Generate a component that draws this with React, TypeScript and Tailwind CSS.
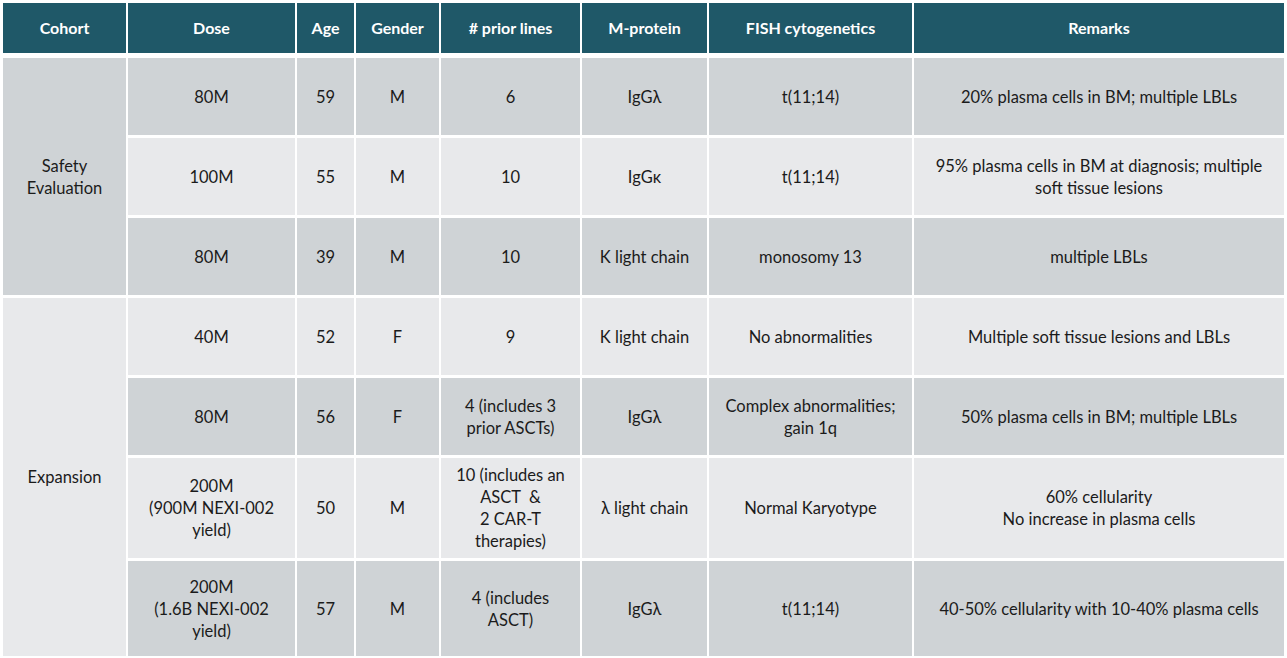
import React from "react";

const DARK = "bg-[#cfd3d6]";
const LIGHT = "bg-[#e8e9eb]";

type Row = {
  dose: React.ReactNode;
  age: string;
  gender: string;
  prior: React.ReactNode;
  mp: string;
  fish: React.ReactNode;
  remarks: React.ReactNode;
};

const rows: Row[] = [
  { dose: "80M", age: "59", gender: "M", prior: "6", mp: "IgGλ", fish: "t(11;14)", remarks: "20% plasma cells in BM; multiple LBLs" },
  { dose: "100M", age: "55", gender: "M", prior: "10", mp: "IgGκ", fish: "t(11;14)", remarks: <>95% plasma cells in BM at diagnosis; multiple<br />soft tissue lesions</> },
  { dose: "80M", age: "39", gender: "M", prior: "10", mp: "K light chain", fish: "monosomy 13", remarks: "multiple LBLs" },
  { dose: "40M", age: "52", gender: "F", prior: "9", mp: "K light chain", fish: "No abnormalities", remarks: "Multiple soft tissue lesions and LBLs" },
  { dose: "80M", age: "56", gender: "F", prior: <>4 (includes 3<br />prior ASCTs)</>, mp: "IgGλ", fish: <>Complex abnormalities;<br />gain 1q</>, remarks: "50% plasma cells in BM; multiple LBLs" },
  { dose: <>200M<br />(900M NEXI-002<br />yield)</>, age: "50", gender: "M", prior: <>10 (includes an<br />ASCT &nbsp;&amp;<br />2 CAR-T<br />therapies)</>, mp: "λ light chain", fish: "Normal Karyotype", remarks: <>60% cellularity<br />No increase in plasma cells</> },
  { dose: <>200M<br />(1.6B NEXI-002<br />yield)</>, age: "57", gender: "M", prior: <>4 (includes<br />ASCT)</>, mp: "IgGλ", fish: "t(11;14)", remarks: "40-50% cellularity with 10-40% plasma cells" },
];

const headers = ["Cohort", "Dose", "Age", "Gender", "# prior lines", "M-protein", "FISH cytogenetics", "Remarks"];

function Cell({ bg, children, className = "" }: { bg: string; children?: React.ReactNode; className?: string }) {
  return (
    <div className={`${bg} flex items-center justify-center text-center leading-[22px] ${className}`}>
      <div>{children}</div>
    </div>
  );
}

export default function App() {
  return (
    <div
      className="w-[1287px] h-[658px] bg-white p-[3px] text-[16.5px] text-[#1b1b1b]"
      style={{ fontFamily: "Lato, 'Open Sans', sans-serif" }}
    >
      <div className="grid grid-cols-[123px_167px_57px_83px_139px_125px_203px_370px] grid-rows-[52px_77px_77px_77px_77px_77px_100px_95px] gap-x-[2px] gap-y-[3px]">
        {headers.map((h) => (
          <div key={h} className="h-[50px] bg-[#1f5868] text-white text-[16px] font-bold flex items-center justify-center">
            {h}
          </div>
        ))}
        <Cell bg={DARK} className="row-span-3">
          Safety
          <br />
          Evaluation
        </Cell>
        {rows.slice(0, 3).map((r, i) => (
          <RowCells key={i} r={r} bg={i % 2 === 0 ? DARK : LIGHT} />
        ))}
        <Cell bg={LIGHT} className="row-span-4">
          Expansion
        </Cell>
        {rows.slice(3).map((r, i) => (
          <RowCells key={i + 3} r={r} bg={i % 2 === 0 ? LIGHT : DARK} />
        ))}
      </div>
    </div>
  );
}

function RowCells({ r, bg }: { r: Row; bg: string }) {
  return (
    <>
      <Cell bg={bg}>{r.dose}</Cell>
      <Cell bg={bg}>{r.age}</Cell>
      <Cell bg={bg}>{r.gender}</Cell>
      <Cell bg={bg}>{r.prior}</Cell>
      <Cell bg={bg}>{r.mp}</Cell>
      <Cell bg={bg}>{r.fish}</Cell>
      <Cell bg={bg}>{r.remarks}</Cell>
    </>
  );
}
